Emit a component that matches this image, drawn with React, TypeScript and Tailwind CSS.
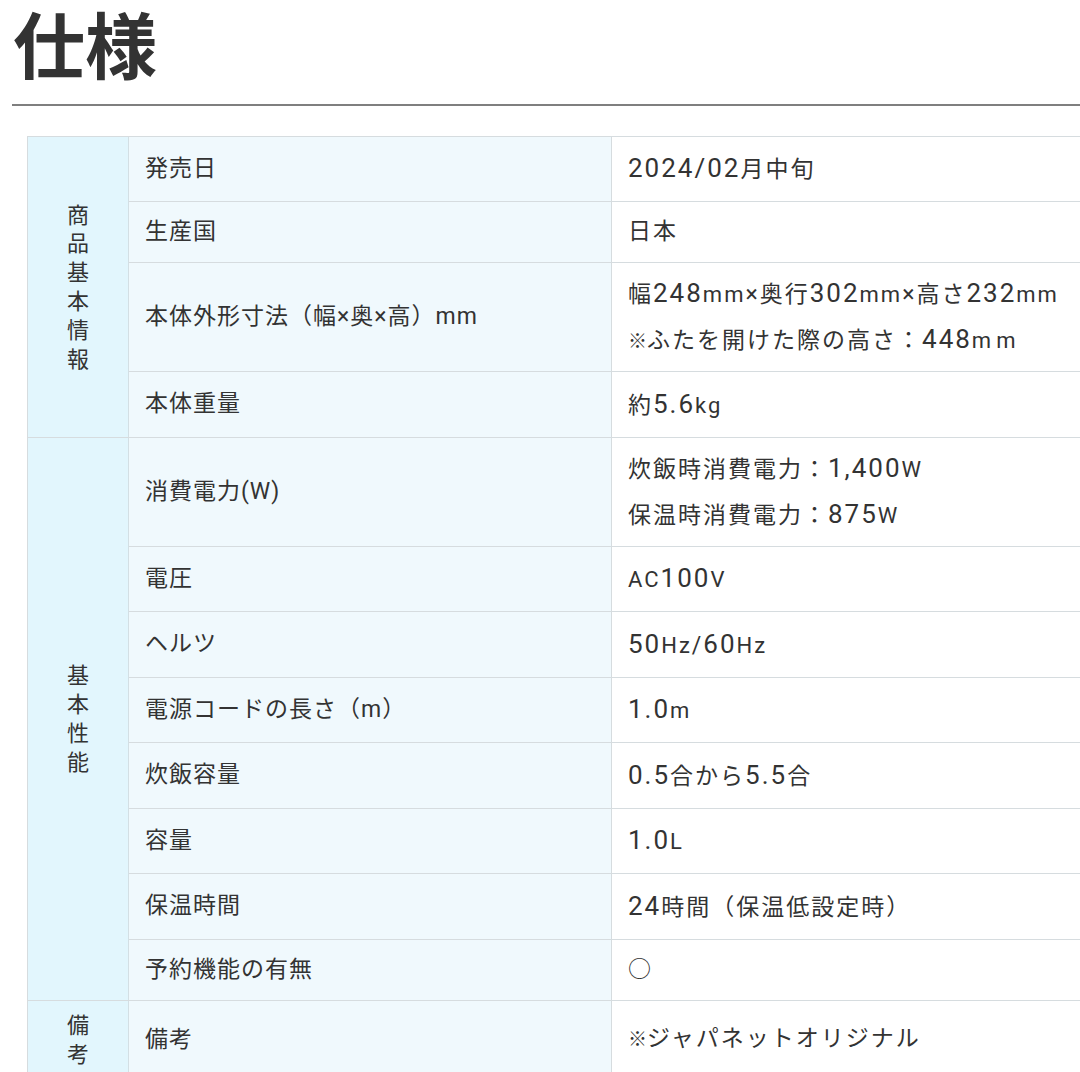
type Row = { label: string; value: string[]; h: string };
type Group = { title: string; rows: Row[] };

const groups: Group[] = [
  {
    title: '商品基本情報',
    rows: [
      { label: '発売日', value: ['2024/02月中旬'], h: 'h-[65px]' },
      { label: '生産国', value: ['日本'], h: 'h-[61px]' },
      {
        label: '本体外形寸法（幅×奥×高）mm',
        value: ['幅248mm×奥行302mm×高さ232mm', '※ふたを開けた際の高さ：448ｍｍ'],
        h: 'h-[109px]',
      },
      { label: '本体重量', value: ['約5.6kg'], h: 'h-[65px]' },
    ],
  },
  {
    title: '基本性能',
    rows: [
      { label: '消費電力(W)', value: ['炊飯時消費電力：1,400W', '保温時消費電力：875W'], h: 'h-[109px]' },
      { label: '電圧', value: ['AC100V'], h: 'h-[65px]' },
      { label: 'ヘルツ', value: ['50Hz/60Hz'], h: 'h-[66px]' },
      { label: '電源コードの長さ（m）', value: ['1.0m'], h: 'h-[65px]' },
      { label: '炊飯容量', value: ['0.5合から5.5合'], h: 'h-[66px]' },
      { label: '容量', value: ['1.0L'], h: 'h-[65px]' },
      { label: '保温時間', value: ['24時間（保温低設定時）'], h: 'h-[66px]' },
      { label: '予約機能の有無', value: ['○'], h: 'h-[60px]' },
    ],
  },
  {
    title: '備考',
    rows: [{ label: '備考', value: ['※ジャパネットオリジナル'], h: 'h-auto' }],
  },
];

// digits print a little larger than the rest, latin units a little smaller
function Value({ text }: { text: string }) {
  const parts = text.split(/([0-9][0-9.,/]*|[A-Za-z]+|※|ｍ)/).filter(Boolean);
  return (
    <span>
      {parts.map((p, i) =>
        /^[0-9]/.test(p) ? (
          <span key={i} className="text-[26px]">{p}</span>
        ) : /^[A-Za-z]/.test(p) ? (
          <span key={i} className="text-[22px]">{p}</span>
        ) : p === '※' ? (
          <span key={i} className="text-[19px] tracking-[0px]">{p}</span>
        ) : p === 'ｍ' ? (
          <span key={i} className="text-[22px] tracking-[5px]">m</span>
        ) : (
          <span key={i}>{p}</span>
        )
      )}
    </span>
  );
}

export default function App() {
  return (
    <div
      className="w-[1080px] h-[1072px] overflow-hidden bg-white text-[#333]"
      style={{ fontFamily: 'Roboto, "Noto Sans CJK JP", sans-serif' }}
    >
      <div className="pl-3">
        <h1
          className="pt-[5px] pl-[1px] text-[72px] leading-[74px] font-bold text-[#333]"
          style={{ fontFamily: '"Noto Sans CJK JP", sans-serif' }}
        >
          仕様
        </h1>
        <div className="mt-[25px] h-[2px] bg-[#7f7f7f]" />
      </div>

      <div className="ml-[27px] mt-[30px] w-[1100px] border-t border-l border-[#d6dcdf]">
        {groups.map((g) => (
          <div key={g.title} className="flex border-b border-[#d6dcdf]">
            <div className="w-[101px] shrink-0 flex flex-col items-center justify-center pt-[8px] pb-[12px] bg-[#e2f6fd] border-r border-[#d3dfe4]">
              {g.title.split('').map((c, i) => (
                <span
                  key={i}
                  className="block text-[22px] leading-[28.8px]"
                  style={{ fontFamily: '"Noto Sans CJK JP", sans-serif' }}
                >
                  {c}
                </span>
              ))}
            </div>
            <div className="flex-1 flex flex-col">
              {g.rows.map((r, i) => (
                <div
                  key={r.label}
                  className={`flex shrink-0 ${r.h} ${i < g.rows.length - 1 ? 'border-b border-[#d6dcdf]' : 'grow'}`}
                >
                  <div className="w-[483px] shrink-0 flex items-center pl-4 bg-[#f0f9fd] border-r border-[#d6dcdf] text-[23px] tracking-[1px]">
                    {r.label}
                  </div>
                  <div className="flex-1 flex flex-col justify-center pl-4 text-[23px] leading-[44px] tracking-[2px]">
                    {r.value.map((v) => (
                      <div key={v}>
                        <Value text={v} />
                      </div>
                    ))}
                  </div>
                </div>
              ))}
            </div>
          </div>
        ))}
      </div>
    </div>
  );
}
